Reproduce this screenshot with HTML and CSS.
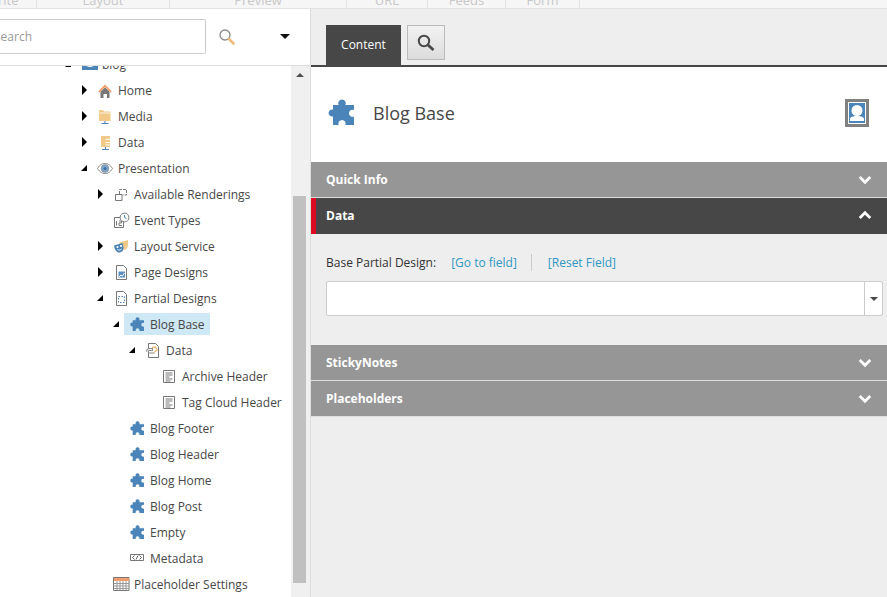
FILE: index.html
```html
<!DOCTYPE html>
<html lang="en">
<head>
    <meta charset="UTF-8">
    <title>Content Editor</title>
    <link rel="stylesheet" href="styles.css">
</head>
<body>
    <svg class="sprites" width="0" height="0">
        <symbol id="puzzle" viewBox="0 0 26 26">
            <path d="M5 26V17.500a3.600 3.600 0 1 1 0-7V6h5.600a3.800 3.800 0 1 1 6.800 0H26v5a3.600 3.600 0 1 0 0 6.600V26h-8.700a3.600 3.600 0 1 0-6.600 0z"/>
        </symbol>
        <symbol id="page" viewBox="0 0 16 16">
            <path d="M2.500 1.500h7l3 3v11h-10z" fill="#fff" stroke="#777"/>
        </symbol>
    </svg>

    <nav class="ribbon">
        <div class="ribbon-tab tab-a">Write</div>
        <div class="ribbon-tab tab-b">Layout</div>
        <div class="ribbon-tab tab-c">Preview</div>
        <div class="ribbon-tab tab-d">URL</div>
        <div class="ribbon-tab tab-e">Feeds</div>
        <div class="ribbon-tab tab-f">Form</div>
    </nav>

    <div class="main">
        <!-- Tree side -->
        <aside class="sidebar">
            <div class="search-bar">
                <input class="search-input" type="text" placeholder="Search">
                <svg class="search-icon" width="16" height="16" viewBox="0 0 16 16">
                    <circle cx="6" cy="6" r="5" fill="#fff" stroke="#8a8a8a" stroke-width="1.300"/>
                    <path d="M10 10l4.500 4.500" stroke="#eebc78" stroke-width="2.600" stroke-linecap="round"/>
                </svg>
                <span class="search-caret"></span>
            </div>

            <div class="tree-wrap">
                <ul class="tree">
                    <li class="row level-0">
                        <span class="toggle open"></span>
                        <span class="node">
                            <svg class="icon" viewBox="0 0 16 16"><rect y="0" width="16" height="14" fill="#4a84b8"/><ellipse cx="8" cy="8" rx="5" ry="3" fill="#fff"/><circle cx="8" cy="8" r="2" fill="#4a84b8"/></svg>
                            <span class="label">blog</span>
                        </span>
                    </li>
                    <li class="row level-1">
                        <span class="toggle closed"></span>
                        <span class="node">
                            <svg class="icon" viewBox="0 0 16 16"><path d="M2.500 16V9.500L7 5.500l4.500 4V16H9v-4H5.500v4z" fill="#777"/><path d="M.8 9.800L7 3.800l6.200 6" fill="none" stroke="#ef9f6c" stroke-width="1.700"/></svg>
                            <span class="label">Home</span>
                        </span>
                    </li>
                    <li class="row level-1">
                        <span class="toggle closed"></span>
                        <span class="node">
                            <svg class="icon" viewBox="0 0 16 16"><path d="M1 2h4l1 1.500h6.500V13H1z" fill="#f1c988"/><path d="M1.500 5h11" stroke="#fff" stroke-width=".7"/><path d="M7 13v2M3.500 15.500h7" stroke="#4a84b8" stroke-width="1.100"/></svg>
                            <span class="label">Media</span>
                        </span>
                    </li>
                    <li class="row level-1">
                        <span class="toggle closed"></span>
                        <span class="node">
                            <svg class="icon" viewBox="0 0 16 16"><path d="M3 2h9v11H3z" fill="#f1c988"/><path d="M7.500 5.200H12M7.500 8.500H12M7.500 11H12" stroke="#fff"/><path d="M7.500 13v2M4 15.500h7" stroke="#4a84b8" stroke-width="1.100"/></svg>
                            <span class="label">Data</span>
                        </span>
                    </li>
                    <li class="row level-1">
                        <span class="toggle open"></span>
                        <span class="node">
                            <svg class="icon" viewBox="0 0 16 16"><path d="M-.5 8.500C2 4.500 4.500 3.500 7 3.500s5 1 7.500 5c-2.500 4-5 5-7.500 5s-5-1-7.500-5z" fill="#fff" stroke="#8a8a8a"/><circle cx="7" cy="8.500" r="3.900" fill="#7ba5cc" stroke="#8a8a8a" stroke-width=".6"/><circle cx="7" cy="8.500" r="1.600" fill="#3f6f9e"/></svg>
                            <span class="label">Presentation</span>
                        </span>
                    </li>
                    <li class="row level-2">
                        <span class="toggle closed"></span>
                        <span class="node">
                            <svg class="icon" viewBox="0 0 16 16" fill="none" stroke="#777"><path d="M1.500 8.500h6.500v6H1.500z"/><path d="M5.500 8V3.500h7V9H8.500" stroke-dasharray="3 1"/></svg>
                            <span class="label">Available Renderings</span>
                        </span>
                    </li>
                    <li class="row level-2">
                        <span class="toggle"></span>
                        <span class="node">
                            <svg class="icon" viewBox="0 0 16 16"><path d="M.5 5.500h9v10h-9z" fill="#fff" stroke="#777"/><path d="M2.500 9v4.500M5 9h2.500v2H5v2.500h3" fill="none" stroke="#777"/><circle cx="10.500" cy="5.500" r="4.400" fill="#fff" stroke="#777"/><path d="M10.500 3v2.500l2 1" fill="none" stroke="#4a84b8"/></svg>
                            <span class="label">Event Types</span>
                        </span>
                    </li>
                    <li class="row level-2">
                        <span class="toggle closed"></span>
                        <span class="node">
                            <svg class="icon" viewBox="0 0 16 16"><path d="M5 4.500l9-2.500v5c0 3-2 4.500-4.500 5z" fill="#f1c988"/><path d="M0 7.500l8.500-2.500 1 5c0 3-2.500 4.500-4.500 4.500S.5 12 0 7.500z" fill="#4a84b8"/><circle cx="3.500" cy="9" r="1.100" fill="#fff"/><circle cx="7" cy="8" r="1.100" fill="#fff"/><path d="M3.500 11.500c1.500 1 3 .5 4-.5" fill="none" stroke="#fff"/></svg>
                            <span class="label">Layout Service</span>
                        </span>
                    </li>
                    <li class="row level-2">
                        <span class="toggle closed"></span>
                        <span class="node">
                            <svg class="icon" viewBox="0 0 16 16"><use href="#page"/><path d="M4.500 7.500h6.500v6H4.500z" fill="#5a8fc0"/><path d="M5 13l2-2 1.500 1 2-3" fill="none" stroke="#fff"/></svg>
                            <span class="label">Page Designs</span>
                        </span>
                    </li>
                    <li class="row level-2">
                        <span class="toggle open"></span>
                        <span class="node">
                            <svg class="icon" viewBox="0 0 16 16"><use href="#page"/><path d="M4.500 6.500h6v6h-6z" fill="none" stroke="#4a84b8" stroke-dasharray="1.500 1.500"/></svg>
                            <span class="label">Partial Designs</span>
                        </span>
                    </li>
                    <li class="row level-3">
                        <span class="toggle open"></span>
                        <span class="node selected">
                            <svg class="icon puzzle"><use href="#puzzle"/></svg>
                            <span class="label">Blog Base</span>
                        </span>
                    </li>
                    <li class="row level-4">
                        <span class="toggle open"></span>
                        <span class="node">
                            <svg class="icon" viewBox="0 0 16 16"><use href="#page"/><path d="M.5 9.500a3 3 0 0 1 3-3h3v2h-3a1 1 0 0 0 0 2.500h5" fill="#fff" stroke="#8a8a8a" stroke-width="1.100"/><path d="M6 5.500l3.500-.5 1.500 3-3 2.500" fill="none" stroke="#eebc78" stroke-width="1.400"/></svg>
                            <span class="label">Data</span>
                        </span>
                    </li>
                    <li class="row level-5">
                        <span class="toggle"></span>
                        <span class="node">
                            <svg class="icon" viewBox="0 0 16 16"><path d="M1.500 2.500h11v12h-11z" fill="#fff" stroke="#777"/><path d="M3.500 5h7M3.500 7h7M3.500 9h4M3.500 11h7M3.500 13h5" stroke="#777"/></svg>
                            <span class="label">Archive Header</span>
                        </span>
                    </li>
                    <li class="row level-5">
                        <span class="toggle"></span>
                        <span class="node">
                            <svg class="icon" viewBox="0 0 16 16"><path d="M1.500 2.500h11v12h-11z" fill="#fff" stroke="#777"/><path d="M3.500 5h7M3.500 7h7M3.500 9h4M3.500 11h7M3.500 13h5" stroke="#777"/></svg>
                            <span class="label">Tag Cloud Header</span>
                        </span>
                    </li>
                    <li class="row level-3">
                        <span class="toggle"></span>
                        <span class="node"><svg class="icon puzzle"><use href="#puzzle"/></svg><span class="label">Blog Footer</span></span>
                    </li>
                    <li class="row level-3">
                        <span class="toggle"></span>
                        <span class="node"><svg class="icon puzzle"><use href="#puzzle"/></svg><span class="label">Blog Header</span></span>
                    </li>
                    <li class="row level-3">
                        <span class="toggle"></span>
                        <span class="node"><svg class="icon puzzle"><use href="#puzzle"/></svg><span class="label">Blog Home</span></span>
                    </li>
                    <li class="row level-3">
                        <span class="toggle"></span>
                        <span class="node"><svg class="icon puzzle"><use href="#puzzle"/></svg><span class="label">Blog Post</span></span>
                    </li>
                    <li class="row level-3">
                        <span class="toggle"></span>
                        <span class="node"><svg class="icon puzzle"><use href="#puzzle"/></svg><span class="label">Empty</span></span>
                    </li>
                    <li class="row level-3">
                        <span class="toggle"></span>
                        <span class="node">
                            <svg class="icon" viewBox="0 0 16 16"><path d="M.5 4.500h13v6h-13z" fill="#fff" stroke="#777"/><path d="M4.500 5.500L2.500 7.500l2 2M9.500 5.500l2 2-2 2M8 5.500l-2 4" fill="none" stroke="#666"/></svg>
                            <span class="label">Metadata</span>
                        </span>
                    </li>
                    <li class="row level-2">
                        <span class="toggle"></span>
                        <span class="node">
                            <svg class="icon" viewBox="0 0 16 16"><path d="M-.5 1.500h15.500v13H-.5z" fill="#fff" stroke="#777"/><path d="M0 2h15v3H0z" fill="#ef9f6c"/><path d="M0 7.500h15M0 10h15M0 12.500h15M3 5v9M6 5v9M9 5v9M12 5v9" stroke="#999"/></svg>
                            <span class="label">Placeholder Settings</span>
                        </span>
                    </li>
                </ul>

                <div class="scrollbar">
                    <span class="scroll-up"></span>
                    <div class="scroll-thumb"></div>
                </div>
            </div>
        </aside>

        <!-- Editor side -->
        <section class="editor">
            <div class="editor-tabs">
                <div class="tab-active">Content</div>
                <button class="tab-search">
                    <svg width="18" height="18" viewBox="0 0 18 18" fill="none" stroke="#474747">
                        <circle cx="7" cy="7" r="5.200" stroke-width="2"/>
                        <path d="M11 11l5.500 5" stroke-width="2.800"/>
                    </svg>
                </button>
            </div>

            <header class="item-header">
                <svg class="item-icon"><use href="#puzzle"/></svg>
                <h1 class="item-title">Blog Base</h1>
                <div class="avatar">
                    <svg width="18" height="22" viewBox="0 0 18 22">
                        <rect x=".5" y=".5" width="17" height="21" fill="#4a84b8" stroke="#fff"/>
                        <circle cx="9" cy="8.500" r="5.500" fill="#fff"/>
                        <path d="M2 19v-2c0-2 3-3 7-3s7 1 7 3v2z" fill="#fff"/>
                    </svg>
                </div>
            </header>

            <div class="section">
                <span>Quick Info</span>
                <svg class="chevron" viewBox="0 0 12 8"><path d="M1.500 1.500L6 6l4.500-4.500"/></svg>
            </div>
            <div class="section section-open">
                <span>Data</span>
                <svg class="chevron" viewBox="0 0 12 8"><path d="M1.500 6.500L6 2l4.500 4.500"/></svg>
            </div>

            <div class="field">
                <div class="field-head">
                    <span class="field-label">Base Partial Design:</span>
                    <a class="field-link" href="#">[Go to field]</a>
                    <span class="field-sep"></span>
                    <a class="field-link" href="#">[Reset Field]</a>
                </div>
                <div class="select">
                    <div class="select-value"></div>
                    <div class="select-btn"><span class="select-caret"></span></div>
                </div>
            </div>

            <div class="section">
                <span>StickyNotes</span>
                <svg class="chevron" viewBox="0 0 12 8"><path d="M1.500 1.500L6 6l4.500-4.500"/></svg>
            </div>
            <div class="section">
                <span>Placeholders</span>
                <svg class="chevron" viewBox="0 0 12 8"><path d="M1.500 1.500L6 6l4.500-4.500"/></svg>
            </div>
        </section>
    </div>
</body>
</html>
```

FILE: styles.css
```css
* {
    margin: 0;
    padding: 0;
    box-sizing: border-box;
}

html, body {
    height: 100%;
    overflow: hidden;
}

body {
    font-family: "Open Sans", "Liberation Sans", sans-serif;
    font-size: 12px;
    color: #474747;
    background: #fff;
    display: flex;
    flex-direction: column;
}

.sprites {
    position: absolute;
}

/* Ribbon tabs, cut off by the top of the window */
.ribbon {
    height: 9px;
    flex: none;
    display: flex;
    background: #f6f6f6;
    border-bottom: 1px solid #e3e3e3;
    overflow: hidden;
}

.ribbon-tab {
    height: 8px;
    line-height: 0;
    font-size: 13px;
    color: #c8c8c8;
    text-align: center;
    border-right: 1px solid #e3e3e3;
    flex: none;
}

.tab-a { width: 37px; text-align: left; text-indent: -14px; }
.tab-b { width: 133px; }
.tab-c { width: 177px; }
.tab-d { width: 81px; }
.tab-e { width: 78px; }
.tab-f { width: 74px; }

.main {
    flex: 1;
    display: flex;
    min-height: 0;
}

/* Tree side */
.sidebar {
    width: 311px;
    flex: none;
    display: flex;
    flex-direction: column;
    border-right: 1px solid #ddd;
}

.search-bar {
    height: 57px;
    flex: none;
    display: flex;
    align-items: center;
    border-bottom: 1px solid #ddd;
    background: #fff;
    position: relative;
    z-index: 2;
}

.search-input {
    width: 206px;
    height: 35px;
    margin-top: -1px;
    text-indent: -6px;
    font-family: inherit;
    font-size: 12px;
    border: 1px solid #ccc;
    border-left: none;
    border-radius: 0 2px 2px 0;
    outline: none;
}

.search-input::placeholder {
    color: #999;
    opacity: 1;
}

.search-icon {
    margin-left: 13px;
    margin-top: -1px;
}

.search-caret {
    width: 0;
    height: 0;
    margin-left: 45px;
    margin-top: -1px;
    border-top: 5px solid #111;
    border-left: 5px solid transparent;
    border-right: 5px solid transparent;
}

.tree-wrap {
    flex: 1;
    display: flex;
    min-height: 0;
    overflow: hidden;
}

.tree {
    flex: 1;
    list-style: none;
    margin-top: -15px;
}

.row {
    height: 26px;
    display: flex;
    align-items: center;
}

.level-0 { padding-left: 64px; }
.level-1 { padding-left: 80px; }
.level-2 { padding-left: 96px; }
.level-3 { padding-left: 112px; }
.level-4 { padding-left: 128px; }
.level-5 { padding-left: 144px; }

.toggle {
    width: 12px;
    height: 12px;
    flex: none;
    position: relative;
}

.toggle.closed::before {
    content: '';
    position: absolute;
    left: 2px;
    top: 1px;
    border-left: 5px solid #000;
    border-top: 5px solid transparent;
    border-bottom: 5px solid transparent;
}

.toggle.open::before {
    content: '';
    position: absolute;
    left: 1px;
    top: 3px;
    border-bottom: 6px solid #000;
    border-left: 6px solid transparent;
}

.node {
    height: 22px;
    display: flex;
    align-items: center;
    padding: 0 5px 0 6px;
    white-space: nowrap;
}

.node.selected {
    background: #cfe8f5;
}

.icon {
    width: 16px;
    height: 16px;
    flex: none;
    margin-right: 4px;
    overflow: visible;
}

.puzzle {
    width: 14px;
    height: 14px;
    margin-right: 6px;
    fill: #4a84b8;
}

/* Scrollbar */
.scrollbar {
    width: 19px;
    flex: none;
    background: #f0f0f0;
    display: flex;
    flex-direction: column;
    align-items: center;
}

.scroll-up {
    margin-top: 7px;
    margin-left: -1px;
    border-bottom: 4px solid #505050;
    border-left: 4px solid transparent;
    border-right: 4px solid transparent;
}

.scroll-thumb {
    width: 13px;
    height: 387px;
    margin-top: 119px;
    margin-left: -2px;
    background: #c0c0c0;
}

/* Editor side */
.editor {
    flex: 1;
    min-width: 0;
    background: #eee;
    display: flex;
    flex-direction: column;
}

.editor-tabs {
    height: 58px;
    flex: none;
    display: flex;
    align-items: flex-start;
    padding: 16px 0 0 15px;
    border-bottom: 2px solid #474747;
}

.tab-active {
    width: 75px;
    height: 40px;
    line-height: 40px;
    text-align: center;
    font-size: 12px;
    color: #fff;
    background: #474747;
}

.tab-search {
    width: 38px;
    height: 35px;
    margin-left: 6px;
    display: flex;
    align-items: center;
    justify-content: center;
    background: linear-gradient(#f2f2f2, #dcdcdc);
    border: 1px solid #bbb;
}

.item-header {
    height: 95px;
    flex: none;
    display: flex;
    align-items: center;
    padding: 0 18px 0 17px;
    background: #fff;
}

.item-icon {
    width: 26px;
    height: 26px;
    flex: none;
    fill: #4a84b8;
    margin-top: -5px;
}

.item-title {
    flex: 1;
    margin-left: 19px;
    margin-top: -3px;
    font-size: 18px;
    font-weight: 400;
    color: #474747;
}

.avatar {
    width: 24px;
    height: 28px;
    margin-top: -3px;
    display: flex;
    border: 3px solid #808080;
}

.section {
    height: 36px;
    flex: none;
    display: flex;
    align-items: center;
    justify-content: space-between;
    padding: 0 15px;
    font-size: 12px;
    font-weight: 700;
    color: #fff;
    background: #969696;
    border-bottom: 1px solid #ddd;
}

.section-open {
    background: #474747;
    border-bottom: none;
    border-left: 5px solid #dc0a23;
    padding: 0 15px 2px 10px;
}

.chevron {
    width: 14px;
    height: 10px;
    fill: none;
    stroke: #fff;
    stroke-width: 2.400;
}

.field {
    height: 111px;
    flex: none;
    padding: 20px 4px 0 15px;
}

.field-head {
    display: flex;
    align-items: center;
    height: 17px;
    font-size: 12px;
}

.field-label {
    color: #333;
}

.field-link {
    color: #2f98c4;
    text-decoration: none;
}

.field-label + .field-link {
    margin-left: 15px;
}

.field-sep {
    width: 1px;
    height: 17px;
    margin: 0 16px 0 14px;
    background: #ccc;
}

.select {
    display: flex;
    height: 35px;
    margin-top: 10px;
    background: #fff;
    border: 1px solid #ccc;
    border-radius: 2px;
}

.select-value {
    flex: 1;
}

.select-btn {
    width: 18px;
    display: flex;
    align-items: center;
    justify-content: center;
    border-left: 1px solid #ccc;
}

.select-caret {
    border-top: 4px solid #474747;
    border-left: 4px solid transparent;
    border-right: 4px solid transparent;
}
```
